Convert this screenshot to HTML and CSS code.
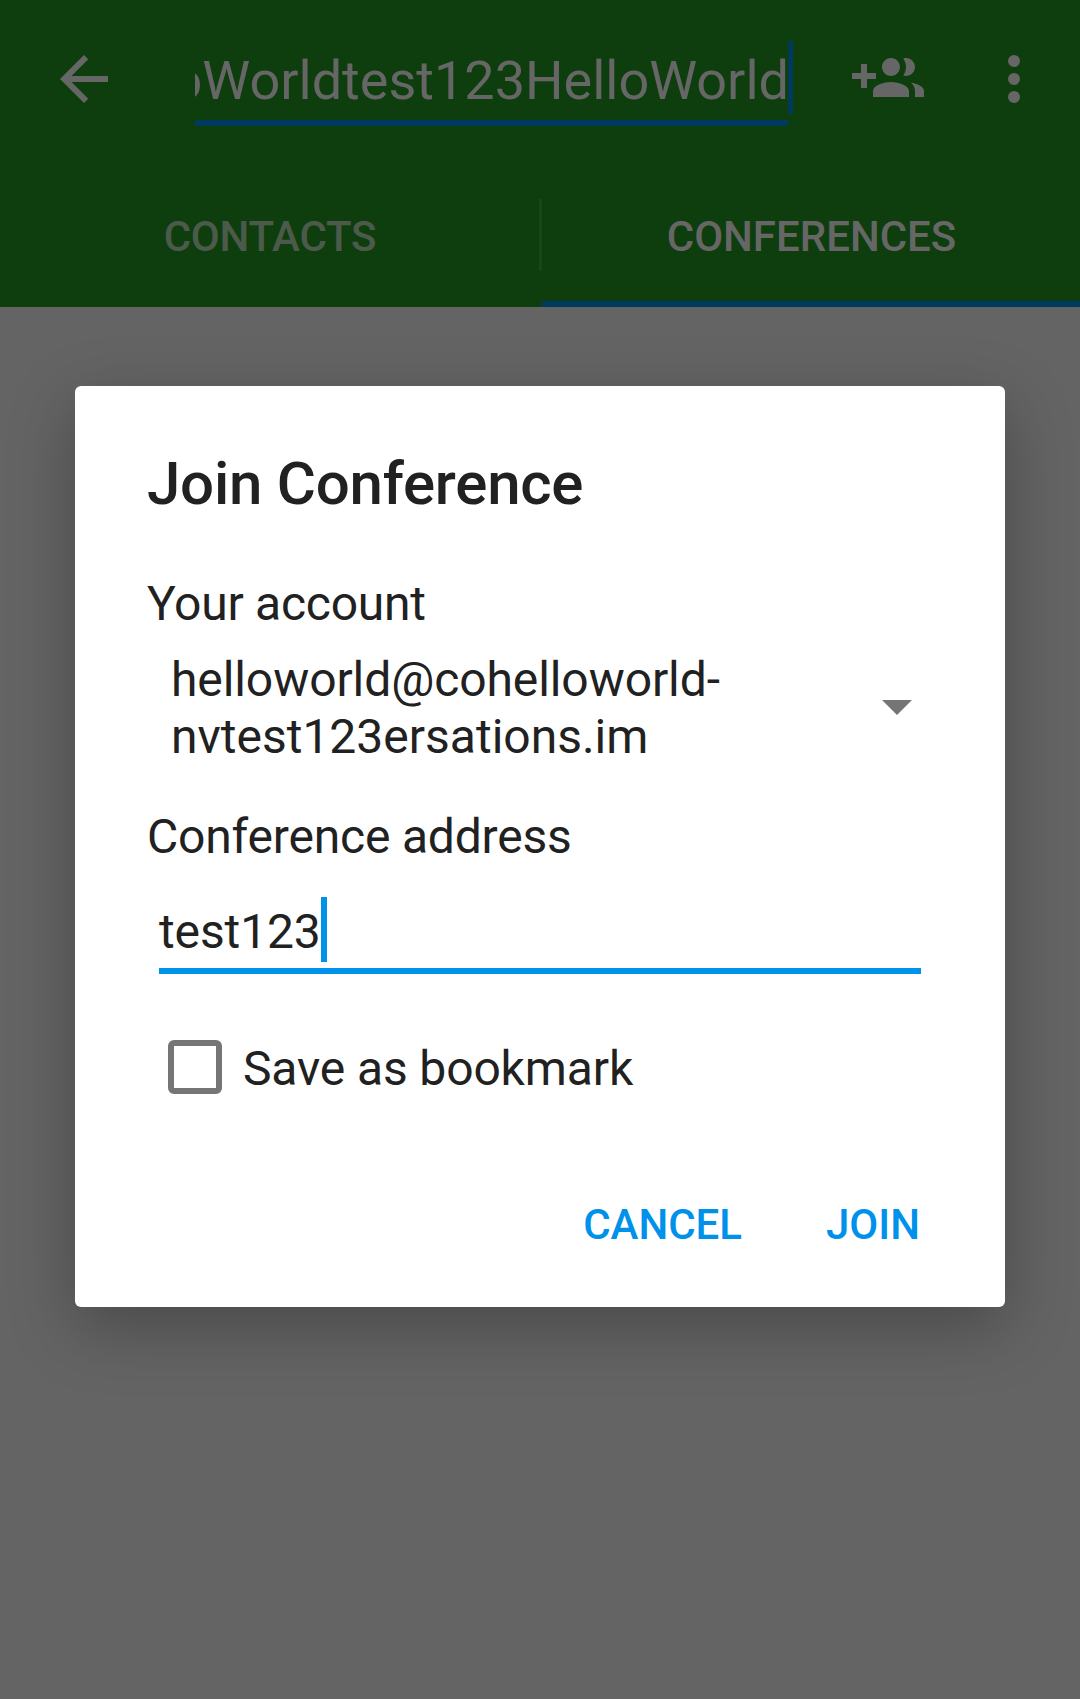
FILE: index.html
```html
<!DOCTYPE html>
<html lang="en">
<head>
<meta charset="utf-8">
<title>Join Conference</title>
<link rel="stylesheet" href="styles.css">
</head>
<body>
<div class="screen">
  <header class="header">
    <div class="toolbar">
      <svg class="icon back" viewBox="0 0 24 24"><path d="M20 11H7.83l5.59-5.59L12 4l-8 8 8 8 1.41-1.41L7.83 13H20v-2z"/></svg>
      <div class="search">
        <div class="search-clip"><span class="search-text">oWorldtest123HelloWorld</span></div>
        <i class="search-caret"></i>
      </div>
      <svg class="icon add" viewBox="0 0 24 24"><path d="M8 10H5V7H3v3H0v2h3v3h2v-3h3v-2zm10 1c1.66 0 2.99-1.34 2.99-3S19.66 5 18 5c-.32 0-.63.05-.91.14.57.81.9 1.79.9 2.86s-.34 2.04-.9 2.86c.28.09.59.14.91.14zm-5 0c1.66 0 2.99-1.34 2.99-3S14.66 5 13 5c-1.66 0-3 1.34-3 3s1.34 3 3 3zm6.62 2.16c.83.73 1.38 1.66 1.38 2.84v2h3v-2c0-1.54-2.37-2.49-4.38-2.84zM13 13c-2 0-6 1-6 3v2h12v-2c0-2-4-3-6-3z"/></svg>
      <svg class="icon more" viewBox="0 0 24 24"><circle cx="12" cy="6" r="2"/><circle cx="12" cy="12" r="2"/><circle cx="12" cy="18" r="2"/></svg>
    </div>
    <nav class="tabs">
      <div class="tab contacts">CONTACTS</div>
      <i class="divider"></i>
      <div class="tab active">CONFERENCES</div>
    </nav>
  </header>
  <main class="content">
    <section class="dialog">
      <h1 class="title">Join Conference</h1>
      <div class="label account-label">Your account</div>
      <div class="account">
        <div><span class="account-start">helloworld@cohelloworld-</span><br>nvtest123ersations.im</div>
        <svg class="arrow" viewBox="0 0 30 15"><path d="M0 0h30L15 15z"/></svg>
      </div>
      <div class="label address-label">Conference address</div>
      <div class="field"><span>test123</span><i class="caret"></i></div>
      <div class="check-row"><i class="checkbox"></i><span>Save as bookmark</span></div>
      <div class="actions"><span>CANCEL</span><span>JOIN</span></div>
    </section>
  </main>
</div>
</body>
</html>
```
FILE: styles.css
```css
* {
  box-sizing: border-box;
}

body {
  margin: 0;
  font-family: Roboto, sans-serif;
}

.screen {
  display: flex;
  flex-direction: column;
  width: 1080px;
  height: 1699px;
  overflow: hidden;
  background: #646464;
}

.header {
  height: 307px;
  background: #0f3e0e;
  color: #666;
}

.toolbar {
  display: flex;
  height: 163px;
  padding: 0 30px 0 48px;
}

.icon {
  flex: none;
  width: 72px;
  height: 72px;
  margin-top: 43px;
  fill: #666;
}

.search {
  position: relative;
  width: 593px;
  height: 126px;
  margin-left: 75px;
  padding-top: 47px;
  border-bottom: 6px solid #003a5e;
}

.search-clip {
  display: flex;
  justify-content: flex-end;
  overflow: hidden;
  font-size: 54px;
  line-height: 68px;
}

.search-text {
  margin-right: -1px;
}

.search-caret {
  position: absolute;
  left: 593px;
  top: 41px;
  width: 5px;
  height: 73px;
  background: #003a5e;
}

.add {
  margin-left: 64px;
}

.more {
  margin-left: 54px;
}

.tabs {
  display: grid;
  grid-template-columns: 539px 3px 538px;
  height: 144px;
  font-size: 42px;
  font-weight: 500;
}

.tab {
  padding: 48px 0 0 1px;
  line-height: 52px;
  text-align: center;
  color: #4c5a4b;
}

.contacts {
  letter-spacing: -.2px;
}

.tab.active {
  color: #666;
  border-bottom: 6px solid #003a5e;
}

.divider {
  height: 72px;
  margin-top: 36px;
  background: #1a451a;
}

.content {
  padding: 79px 75px 0;
}

.dialog {
  height: 921px;
  padding: 63px 72px 0;
  border-radius: 6px;
  background: #fff;
  box-shadow: 0 20px 66px rgba(0, 0, 0, .27);
  color: #212121;
  font-size: 48px;
  line-height: 57px;
}

.title {
  margin: 0;
  font-size: 60px;
  font-weight: 500;
  line-height: 70px;
  letter-spacing: -.24px;
}

.label {
  margin-top: 56px;
}

.account-label {
  letter-spacing: -.25px;
}

.account {
  display: flex;
  justify-content: space-between;
  align-items: center;
  margin-top: 19px;
  padding: 0 21px 0 24px;
}

.account-start {
  letter-spacing: -.09px;
}

.arrow {
  width: 30px;
  height: 15px;
  margin-bottom: 2px;
  fill: #757575;
}

.address-label {
  margin-top: 43px;
  letter-spacing: -.19px;
}

.field {
  display: flex;
  height: 77px;
  margin: 32px 12px 0;
  border-bottom: 6px solid #0091ea;
}

.field span {
  padding-top: 6px;
  letter-spacing: -.12px;
}

.caret {
  width: 6px;
  height: 65px;
  background: #0091ea;
}

.check-row {
  display: flex;
  align-items: center;
  gap: 21px;
  margin-top: 66px;
  padding-left: 21px;
  letter-spacing: -.13px;
}

.checkbox {
  width: 54px;
  height: 54px;
  margin-bottom: 3px;
  border: 6px solid #757575;
  border-radius: 6px;
}

.actions {
  display: flex;
  justify-content: flex-end;
  gap: 84px;
  margin: 103px 13px 0 0;
  color: #0091ea;
  font-size: 42px;
  font-weight: 500;
  line-height: 50px;
}
```
